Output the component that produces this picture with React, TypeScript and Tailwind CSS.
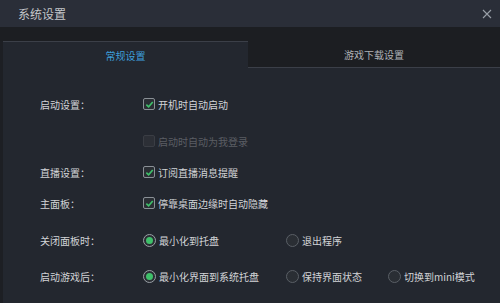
import React from "react";

const font = { fontFamily: '"Noto Sans CJK SC", "Noto Sans", sans-serif' };

function Check({ checked = true, disabled = false }: { checked?: boolean; disabled?: boolean }) {
  return (
    <span
      className={
        "flex h-[12px] w-[12px] items-center justify-center rounded-[2px] border " +
        (disabled ? "border-[#3a3d44] bg-[#2c2f36]" : "border-[#8a9096] bg-[#2a2e34]")
      }
    >
      {checked && (
        <svg width="9" height="9" viewBox="0 0 10 10">
          <path d="M1.5 5.2 L4 7.6 L8.6 2.2" fill="none" stroke="#3fc06a" strokeWidth="1.8" />
        </svg>
      )}
    </span>
  );
}

function Radio({ on = false }: { on?: boolean }) {
  return (
    <span
      className={
        "flex h-[13px] w-[13px] items-center justify-center rounded-full border " +
        (on ? "border-[#9aa0a6] bg-[#2a2e34]" : "border-[#5a5f66] bg-[#2a2e34]")
      }
    >
      {on && <span className="h-[7px] w-[7px] rounded-full bg-[#3fc06a]" />}
    </span>
  );
}

function Row({ label, children, h }: { label: string; children: React.ReactNode; h: string }) {
  return (
    <div className={"flex items-center " + h}>
      <div className="w-[140px] shrink-0 pl-[37px] text-[10px] text-[#d2d4d7] whitespace-nowrap">{label}</div>
      <div className="flex items-center">{children}</div>
    </div>
  );
}

const txt = "ml-[3px] text-[10px] text-[#d2d4d7] whitespace-nowrap";

export default function App() {
  return (
    <div className="h-[303px] w-[500px] overflow-hidden bg-[#1d1f24]" style={font}>
      <div className="flex h-[27px] items-center justify-between bg-[#2a2e38] pl-[18px] pr-[8px]">
        <span className="text-[12px] text-[#c4c6ca]">系统设置</span>
        <svg width="10" height="10" viewBox="0 0 10 10">
          <path d="M1 1 L9 9 M9 1 L1 9" stroke="#9aa0a8" strokeWidth="1.1" />
        </svg>
      </div>
      <div className="h-[14px] bg-[#1c1e22]" />
      <div className="flex h-[27px]">
        <div className="ml-[3px] flex w-[245px] items-center justify-center border-t border-[#3b3f48] bg-[#23272f] text-[10px] text-[#3d9fdc]">
          常规设置
        </div>
        <div className="flex flex-1 items-center justify-center border-b border-[#3b3f48] bg-[#1c1e22] text-[10px] text-[#aeb1b6]">
          游戏下载设置
        </div>
      </div>
      <div className="ml-[3px] h-[235px] bg-[#23272f] pt-[20px]">
        <Row label="启动设置：" h="h-[32px]">
          <Check />
          <span className={txt}>开机时自动启动</span>
        </Row>
        <Row label="" h="h-[42px]">
          <Check checked={false} disabled />
          <span className="ml-[3px] text-[10px] text-[#5b5e64]">启动时自动为我登录</span>
        </Row>
        <Row label="直播设置：" h="h-[20px]">
          <Check />
          <span className={txt}>订阅直播消息提醒</span>
        </Row>
        <Row label="主面板：" h="h-[42px]">
          <Check />
          <span className={txt}>停靠桌面边缘时自动隐藏</span>
        </Row>
        <Row label="关闭面板时：" h="h-[32px]">
          <div className="flex w-[143px] items-center">
            <Radio on />
            <span className={txt}>最小化到托盘</span>
          </div>
          <div className="flex items-center">
            <Radio />
            <span className={txt}>退出程序</span>
          </div>
        </Row>
        <Row label="启动游戏后：" h="h-[40px]">
          <div className="flex w-[143px] items-center">
            <Radio on />
            <span className={txt}>最小化界面到系统托盘</span>
          </div>
          <div className="flex w-[102px] items-center">
            <Radio />
            <span className={txt}>保持界面状态</span>
          </div>
          <div className="flex items-center">
            <Radio />
            <span className={txt}>切换到mini模式</span>
          </div>
        </Row>
      </div>
    </div>
  );
}
